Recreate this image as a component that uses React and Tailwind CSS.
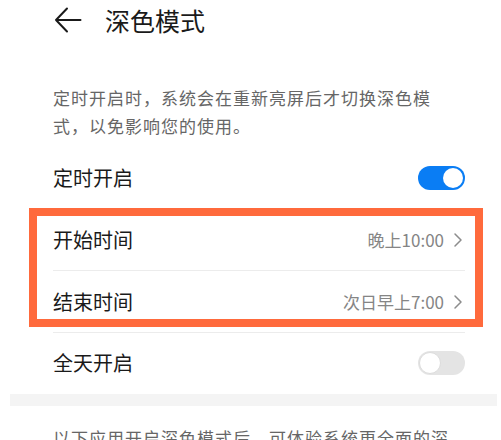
import React from "react";

const font = { fontFamily: '"Noto Sans CJK SC", "Noto Sans", sans-serif' };

function Toggle({ on }) {
  return on ? (
    <div className="flex h-[24px] w-[47px] items-center justify-end rounded-full bg-[#0a7df4] px-[2px]">
      <div className="h-[20px] w-[20px] rounded-full bg-white" />
    </div>
  ) : (
    <div className="flex h-[24px] w-[47px] items-center justify-start rounded-full bg-[#e4e4e4] px-[1px]">
      <div className="h-[22px] w-[22px] rounded-full border-[1.5px] border-[#dcdcdc] bg-white" />
    </div>
  );
}

function Chevron() {
  return (
    <svg width="10" height="16" viewBox="0 0 10 16" className="ml-[9px] mr-[2px]">
      <path d="M2 2 L8 8 L2 14" fill="none" stroke="#8c8c8c" strokeWidth="1.5" strokeLinecap="round" strokeLinejoin="round" />
    </svg>
  );
}

function SwitchRow({ label, on }) {
  return (
    <div className="flex h-[60px] items-center justify-between">
      <span className="text-[20px] text-[#1a1a1a]">{label}</span>
      <Toggle on={on} />
    </div>
  );
}

function TimeRow({ label, value }) {
  return (
    <div className="flex h-[61px] items-center justify-between">
      <span className="text-[20px] text-[#1a1a1a]">{label}</span>
      <div className="flex items-center">
        <span className="text-[17px] text-[#858585]">{value}</span>
        <Chevron />
      </div>
    </div>
  );
}

export default function App() {
  return (
    <div className="h-[440px] w-[501px] overflow-hidden bg-white" style={font}>
      {/* header */}
      <div className="flex h-[40px] items-center">
        <svg width="28" height="26" viewBox="0 0 28 26" className="ml-[54px]">
          <path d="M13 1.5 L2 13 L13 24.5 M2 13 L26.5 13" fill="none" stroke="#1a1a1a" strokeWidth="2" strokeLinecap="round" strokeLinejoin="round" />
        </svg>
        <span className="ml-[23px] text-[25px] leading-none text-[#1a1a1a]">深色模式</span>
      </div>

      {/* description */}
      <p className="mx-[53px] mr-[36px] mt-[44px] text-[17px] leading-[28px] tracking-[1px] text-[#666666]">
        定时开启时，系统会在重新亮屏后才切换深色模式，以免影响您的使用。
      </p>

      {/* settings list */}
      <div className="ml-[53px] mr-[36px] mt-[8px]">
        <SwitchRow label="定时开启" on />
        <div className="h-px bg-[#ececec]" />
        <div className="relative">
          <TimeRow label="开始时间" value="晚上10:00" />
          <div className="h-px bg-[#ececec]" />
          <TimeRow label="结束时间" value="次日早上7:00" />
          <div className="pointer-events-none absolute left-[-24px] top-[-1px] h-[119px] w-[454px] border-[8px] border-[#ff6a3c]" />
        </div>
        <div className="h-px bg-[#ececec]" />
        <SwitchRow label="全天开启" on={false} />
      </div>

      {/* section gap */}
      <div className="ml-[10px] mr-[4px] mt-[1px] h-[12px] bg-[#f4f4f4]" />

      <p className="ml-[53px] mr-[36px] mt-[18px] text-[17px] leading-[28px] tracking-[1px] text-[#666666]">
        以下应用开启深色模式后，可体验系统更全面的深色效果。
      </p>
    </div>
  );
}
